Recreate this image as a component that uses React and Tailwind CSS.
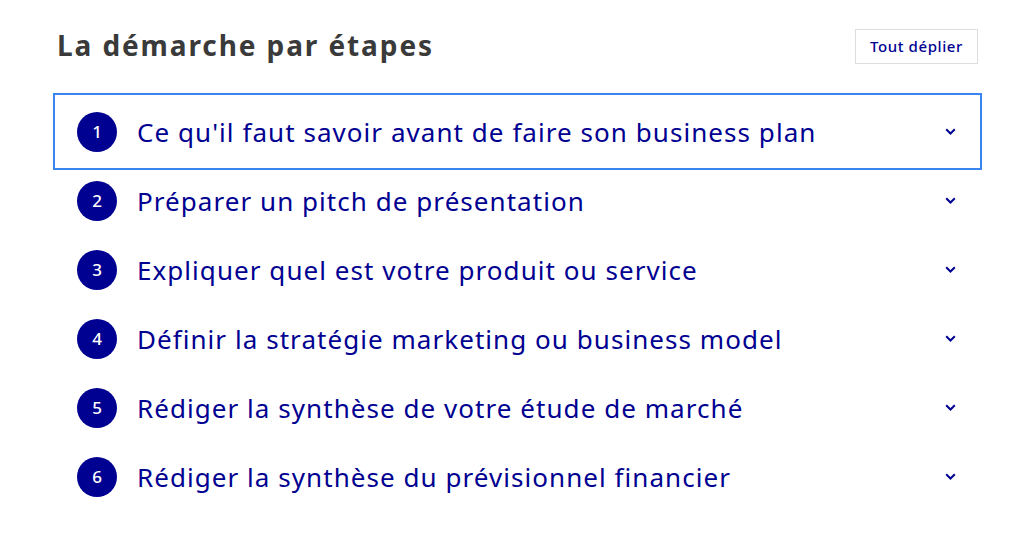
import React from "react";

const steps = [
  "Ce qu'il faut savoir avant de faire son business plan",
  "Préparer un pitch de présentation",
  "Expliquer quel est votre produit ou service",
  "Définir la stratégie marketing ou business model",
  "Rédiger la synthèse de votre étude de marché",
  "Rédiger la synthèse du prévisionnel financier",
];

function Chevron() {
  return (
    <svg width="11" height="7" viewBox="0 0 11 7" className="text-[#000091]">
      <path d="M1.2 1.2l4.3 4.3 4.3-4.3" fill="none" stroke="currentColor" strokeWidth="2" />
    </svg>
  );
}

export default function App() {
  return (
    <div
      className="bg-white w-[1024px] h-[549px] overflow-hidden"
      style={{ fontFamily: "'Noto Sans', sans-serif" }}
    >
      <div className="ml-[57px] w-[921px] pt-[27px]">
        <div className="flex items-start justify-between">
          <h2 className="text-[28px] leading-[36px] font-bold tracking-[1.9px] text-[#3a3a3a]">
            La démarche par étapes
          </h2>
          <button className="mt-[2px] h-[35px] px-[14px] border border-[#dddddd] text-[15px] font-medium tracking-[0.6px] text-[#000091]">
            Tout déplier
          </button>
        </div>
        <ul className="mt-[33px]">
          {steps.map((s, i) => (
            <li
              key={i}
              className={
                "flex items-center h-[69px] pl-[20px] pr-[22px] " +
                (i === 0 ? "outline-2 outline-offset-2 outline-[#3b85f0]" : "")
              }
            >
              <span className="w-[40px] h-[40px] rounded-full bg-[#000091] text-white flex items-center justify-center text-[17px] font-medium shrink-0">
                {i + 1}
              </span>
              <span className="ml-[20px] pt-[1px] flex-1 text-[26px] tracking-[1.05px] text-[#000091]">{s}</span>
              <Chevron />
            </li>
          ))}
        </ul>
      </div>
    </div>
  );
}
